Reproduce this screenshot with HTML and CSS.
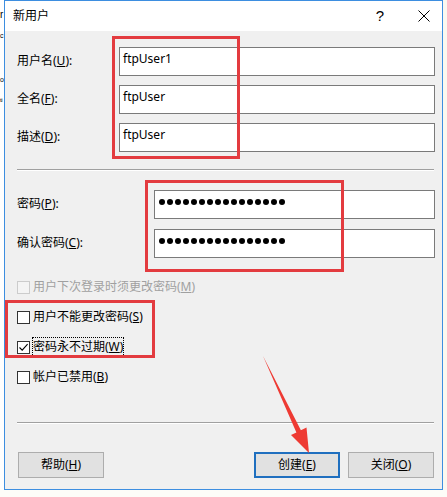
FILE: index.html
```html
<!DOCTYPE html>
<html lang="zh-CN">
<head>
<meta charset="utf-8">
<title>新用户</title>
<link rel="stylesheet" href="styles.css">
</head>
<body>
<div class="screen">
  <div class="bg-strip">
    <div class="frag f1">r</div>
    <div class="frag f2">c</div>
    <div class="frag f3">o</div>
    <div class="frag f4">ti</div>
  </div>
  <div class="window">
    <div class="titlebar">
      <span class="title">新用户</span>
      <span class="help">?</span>
      <svg class="close" width="12" height="12" viewBox="0 0 12 12"><path d="M0.5 0.5 L11.5 11.5 M11.5 0.5 L0.5 11.5" stroke="#000" stroke-width="1" fill="none"/></svg>
    </div>
    <div class="form">
      <div class="grid grid1">
        <span class="label">用户名(<u>U</u>):</span>
        <div class="field">ftpUser1</div>
        <span class="label">全名(<u>F</u>):</span>
        <div class="field">ftpUser</div>
        <span class="label">描述(<u>D</u>):</span>
        <div class="field">ftpUser</div>
      </div>
      <div class="sep sep1"></div>
      <div class="grid grid2">
        <span class="label">密码(<u>P</u>):</span>
        <div class="field pw"><i></i><i></i><i></i><i></i><i></i><i></i><i></i><i></i><i></i><i></i><i></i><i></i><i></i><i></i><i></i><i></i></div>
        <span class="label">确认密码(<u>C</u>):</span>
        <div class="field pw"><i></i><i></i><i></i><i></i><i></i><i></i><i></i><i></i><i></i><i></i><i></i><i></i><i></i><i></i><i></i><i></i></div>
      </div>
      <div class="checks">
        <div class="check disabled"><span class="box"></span><span>用户下次登录时须更改密码(<u>M</u>)</span></div>
        <div class="check"><span class="box"></span><span>用户不能更改密码(<u>S</u>)</span></div>
        <div class="check"><span class="box"><svg width="11" height="11" viewBox="0 0 11 11"><path d="M1.5 5.5 L4.2 8.2 L9.6 2.2" stroke="#000" stroke-width="1.1" fill="none"/></svg></span><span class="focus">密码永不过期(<u>W</u>)</span></div>
        <div class="check"><span class="box"></span><span>帐户已禁用(<u>B</u>)</span></div>
      </div>
      <div class="sep sep2"></div>
      <div class="buttons">
        <div class="btn">帮助(<u>H</u>)</div>
        <div class="btn default">创建(<u>E</u>)</div>
        <div class="btn">关闭(<u>O</u>)</div>
      </div>
    </div>
  </div>
  <div class="right-strip"></div>
</div>
<div class="mark mark1"></div>
<div class="mark mark2"></div>
<div class="mark mark3"></div>
<svg class="arrow" width="447" height="497" viewBox="0 0 447 497">
  <polygon points="263,356 300.9,430.2 306.5,427.5 309,453 291,435 296.4,432.4" fill="#ee3a33"/>
</svg>
</body>
</html>
```

FILE: styles.css
```css
* {
  box-sizing: border-box;
}

html, body {
  margin: 0;
  padding: 0;
}

body {
  width: 447px;
  height: 497px;
  overflow: hidden;
  background: #fdfcf8;
  font-family: "Noto Sans", "Noto Sans CJK SC", sans-serif;
  font-size: 12px;
  line-height: 16px;
  color: #000;
  position: relative;
}

.screen {
  display: flex;
  height: 490px;
}

.bg-strip {
  width: 4px;
  flex: none;
  overflow: hidden;
  background: #fff;
  font-family: "Liberation Sans", sans-serif;
  line-height: 16px;
}

.frag {
  white-space: nowrap;
  height: 16px;
  font-size: 7px;
  letter-spacing: -0.5px;
}

.f1 { margin-top: 7px; font-size: 10px; }
.f2 { margin-top: 5px; }
.f3 { margin-top: 28px; }
.f4 { margin-top: 4px; font-size: 6px; }

.window {
  width: 439px;
  height: 490px;
  flex: none;
  border: 1px solid #3d8ee0;
  background: #f0f0f0;
  display: flex;
  flex-direction: column;
}

.right-strip {
  flex: 1;
  background: #fbf8f0;
}

.titlebar {
  height: 30px;
  flex: none;
  background: #fff;
  display: flex;
  align-items: center;
  padding-left: 8px;
  padding-right: 12px;
}

.title {
  font-size: 12px;
}

.help {
  margin-left: auto;
  font-family: "Liberation Sans", sans-serif;
  font-size: 15px;
  line-height: 16px;
  margin-right: 34px;
  margin-top: -1px;
}

.close {
  display: block;
  margin-top: -1px;
}

.form {
  padding: 16px 7px 0 12px;
  display: flex;
  flex-direction: column;
}

.grid {
  display: grid;
  grid-auto-rows: 29px;
  align-items: center;
}

.grid1 {
  grid-template-columns: 102px 1fr;
  row-gap: 9px;
}

.grid2 {
  grid-template-columns: 137px 1fr;
  row-gap: 10px;
  margin-top: 19px;
}

.label {
  padding-bottom: 2px;
  white-space: nowrap;
}

.field {
  height: 29px;
  border: 1px solid #7a7a7a;
  background: #fff;
  padding: 3px 0 0 3px;
  line-height: 16px;
}

.pw {
  display: flex;
  gap: 2px;
  padding: 8px 0 0 4px;
}

.pw i {
  display: block;
  width: 6px;
  height: 6px;
  border-radius: 50%;
  background: #000;
}

.sep {
  border-top: 1px solid #a0a0a0;
  border-bottom: 1px solid #fff;
  margin-right: 1px;
}

.sep1 {
  margin-top: 17px;
}

.checks {
  margin-top: 14px;
  display: flex;
  flex-direction: column;
}

.check {
  height: 30px;
  display: flex;
  align-items: center;
  white-space: nowrap;
}

.box {
  width: 13px;
  height: 13px;
  flex: none;
  border: 1px solid #333;
  background: #fff;
  margin-right: 3px;
  display: flex;
  align-items: center;
  justify-content: center;
}

.box svg {
  display: block;
}

.disabled {
  color: #a0a0a0;
}

.disabled .box {
  border-color: #cccccc;
  background: #f4f4f4;
}

.focus {
  border: 1px dotted #000;
  margin-left: -1px;
  padding: 1px 0 1px 0;
}

.sep2 {
  margin-top: 30px;
}

.buttons {
  margin-top: 28px;
  margin-left: 1px;
  margin-right: 1px;
  display: flex;
}

.btn {
  width: 86px;
  height: 26px;
  border: 1px solid #adadad;
  background: #e1e1e1;
  display: flex;
  align-items: center;
  justify-content: center;
}

.btn.default {
  margin-left: auto;
  margin-right: 8px;
  border: 2px solid #1f6fbf;
}

.mark {
  position: absolute;
  border: 3px solid #e33b3f;
}

.mark1 {
  left: 112px;
  top: 36px;
  width: 128px;
  height: 123px;
}

.mark2 {
  left: 145px;
  top: 180px;
  width: 199px;
  height: 92px;
}

.mark3 {
  left: 5px;
  top: 300px;
  width: 150px;
  height: 58px;
}

.arrow {
  position: absolute;
  left: 0;
  top: 0;
  pointer-events: none;
}
```
